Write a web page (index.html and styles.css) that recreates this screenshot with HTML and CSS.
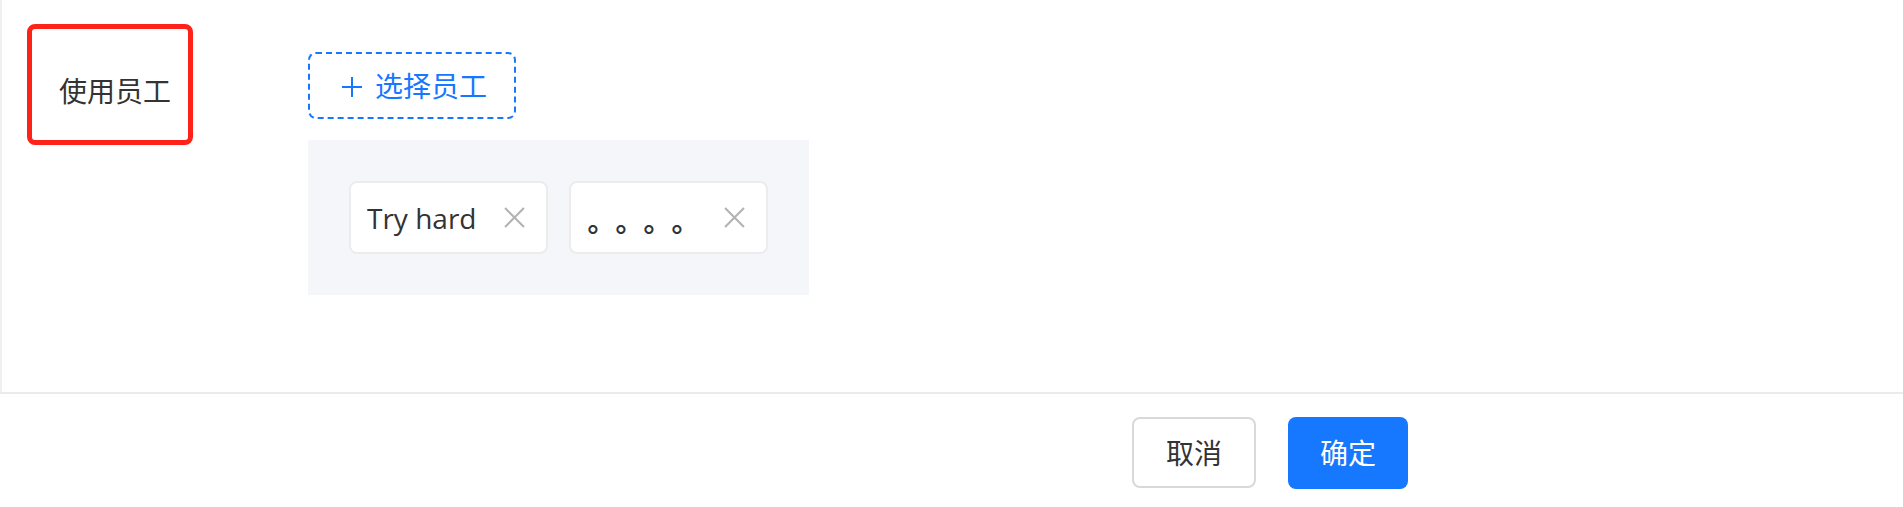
FILE: index.html
```html
<!DOCTYPE html>
<html lang="zh-CN">
<head>
<meta charset="utf-8">
<title>使用员工</title>
<link rel="stylesheet" href="styles.css">
</head>
<body>
<div class="dialog">
  <div class="dialog-body">
    <div class="label-box"><span class="label-text">使用员工</span></div>
    <div class="field">
      <button class="select-btn" type="button">
        <svg class="plus" width="22" height="22" viewBox="0 0 22 22"><path d="M11 1v20M1 11h20" stroke="#1677ff" stroke-width="2" fill="none"/></svg>
        <span>选择员工</span>
      </button>
      <div class="tag-panel">
        <div class="tag"><span class="tag-text">Try hard</span><svg class="close" width="20" height="20" viewBox="0 0 20 20"><path d="M1 1L19 19M19 1L1 19" stroke="#b3b3b3" stroke-width="2" fill="none"/></svg></div>
        <div class="tag tag-dots"><span class="tag-text dots"><span class="dot">。</span><span class="dot">。</span><span class="dot">。</span><span class="dot">。</span></span><svg class="close" width="20" height="20" viewBox="0 0 20 20"><path d="M1 1L19 19M19 1L1 19" stroke="#b3b3b3" stroke-width="2" fill="none"/></svg></div>
      </div>
    </div>
  </div>
  <div class="dialog-footer">
    <button class="btn btn-cancel" type="button">取消</button>
    <button class="btn btn-ok" type="button">确定</button>
  </div>
</div>
</body>
</html>
```

FILE: styles.css
```css
html, body {
  margin: 0;
  padding: 0;
  background: #ffffff;
}
body {
  font-family: "Open Sans", "Noto Sans CJK SC", sans-serif;
  font-size: 28px;
  color: #333333;
}
.dialog {
  width: 1903px;
  height: 507px;
  display: flex;
  flex-direction: column;
}
.dialog-body {
  height: 392px;
  box-sizing: border-box;
  border-left: 2px solid #f0f0f0;
  padding-top: 24px;
  display: flex;
  align-items: flex-start;
}
.label-box {
  width: 166px;
  height: 121px;
  box-sizing: border-box;
  margin-left: 25px;
  border: 5px solid #ff2218;
  border-radius: 8px;
  display: flex;
  align-items: center;
  padding-left: 27px;
  padding-top: 12px;
}
.label-text {
  white-space: nowrap;
  line-height: 40px;
}
.field {
  margin-left: 115px;
  padding-top: 28px;
  display: flex;
  flex-direction: column;
  align-items: flex-start;
}
.select-btn {
  width: 208px;
  height: 67px;
  box-sizing: border-box;
  border: 2px dashed #1677ff;
  border-radius: 8px;
  background: #ffffff;
  color: #1677ff;
  font: inherit;
  display: flex;
  align-items: center;
  padding: 0 0 0 31px;
  gap: 12px;
  line-height: 40px;
}
.plus {
  display: block;
  flex: none;
  margin-top: 2px;
}
.tag-panel {
  margin-top: 21px;
  background: #f5f6f9;
  padding: 41px;
  display: inline-flex;
  gap: 21px;
}
.tag {
  height: 73px;
  box-sizing: border-box;
  border: 2px solid #ececec;
  border-radius: 8px;
  background: #ffffff;
  display: flex;
  align-items: center;
  padding: 0 21px 0 16px;
}
.tag-text {
  white-space: nowrap;
  line-height: 40px;
}
.dots {
  font-family: "Noto Sans CJK SC", sans-serif;
  display: flex;
  text-spacing-trim: space-all;
  font-weight: 700;
  padding-top: 4px;
}
.dot {
  display: inline-block;
  width: 28px;
}
.close {
  display: block;
  flex: none;
  margin-left: 28px;
  width: 21px;
  height: 21px;
}
.tag-dots .close {
  margin-left: 25px;
}
.dialog-footer {
  flex: 1;
  border-top: 2px solid #ebebeb;
  padding-top: 23px;
  padding-left: 1132px;
  display: flex;
  align-items: flex-start;
  gap: 32px;
}
.btn {
  height: 71px;
  box-sizing: border-box;
  border-radius: 8px;
  font: inherit;
  line-height: 40px;
  cursor: pointer;
}
.btn-cancel {
  width: 124px;
  border: 2px solid #d9d9d9;
  background: #ffffff;
  color: #333333;
}
.btn-ok {
  width: 120px;
  height: 72px;
  border: none;
  background: #1677ff;
  color: #ffffff;
}
```
